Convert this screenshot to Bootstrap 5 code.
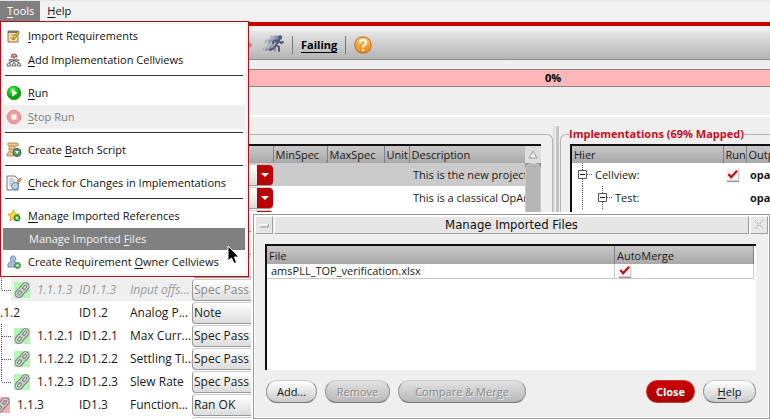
<!DOCTYPE html>
<html lang="en">
<head>
<meta charset="utf-8">
<meta name="viewport" content="width=device-width, initial-scale=1">
<title>Manage Imported Files</title>
<link href="https://cdn.jsdelivr.net/npm/bootstrap@5.3.0/dist/css/bootstrap.min.css" rel="stylesheet">
<style>
body{font:11px/16px "Open Sans","Noto Sans",sans-serif;color:#1a1a1a;background:#efefef;height:100vh;overflow:hidden}
u{text-underline-offset:2px}
.menubar{height:22px;border-top:1px solid #e4e4e4;background:#f2f2f2}
.menubar a{color:#111;text-decoration:none;padding:1px 6px 0 7px;line-height:18px}
.menubar a.opened{background:#808080;color:#fff}
.redline{height:4px;background:#c80000}
.tools{height:29px;margin-top:5px;padding-left:246px;background:linear-gradient(#e6e6e6,#b4b4b4);border-bottom:1px solid #888}
.vline{width:1px;height:18px;background:#777}
.tools a{color:#000;font-size:11px;font-weight:700;text-decoration:underline;text-underline-offset:3px}
.prog{margin-top:9px;height:18px;border:solid #888;border-width:1px 0;background:#ffb6b6;color:#000;font-weight:700;padding-left:336px}
.whiteline{height:2px;background:#fff;margin-top:28px}
.panes{padding-top:9px;min-height:0;overflow:hidden}
.leftpane{width:553px;flex:none;margin-top:8px;border:solid #b4b4b4;border-width:1px 1px 0 0;border-radius:0 6px 0 0;padding:9px 11px 0 0}
.splitter{width:6px;flex:none;background:linear-gradient(90deg,#ddd 0 2px,#f4f4f4 2px 3px,#c4c4c4 3px)}
.rightpane{min-width:0;border:1px solid #b4b4b4;border-width:1px 0 0 1px;border-radius:6px 0 0 0;padding:2px 0 0 9px;margin-left:1px}
.rightpane legend{float:none;width:auto;margin:0 0 0 -1px;padding:0;font-size:11px;line-height:16px;font-weight:700;color:#c4101c;white-space:nowrap}
.sheet{border-top:2px solid #111;background:#fff;overflow:hidden}
.inset{border-left:2px solid #111}
.gridtable{width:100%;table-layout:fixed;border-collapse:collapse;white-space:nowrap}
.gridtable th{font-weight:400;background:linear-gradient(#c8c8c8,#a8a8a8);height:17px;padding:0 2px;line-height:17px;border-right:1px solid #808080;overflow:hidden}
.gridtable td{height:23px;padding:0;line-height:18px;overflow:hidden;color:#1a1a1a}
.gridtable svg{display:block}
.wide td{font-size:12px}
.chosen td{background:#cbcbcb}
.off td{background:#efefef;color:#999;font-style:italic}
.off td:first-child{background:linear-gradient(90deg,#fff 11px,#efefef 11px)}
.pick{appearance:none;display:block;width:81px;height:22px;border:1px solid #999;border-top-color:#ccc;border-right:0;border-radius:4px;padding:0 1px;font:12px/16px "Open Sans","Noto Sans",sans-serif;color:#1a1a1a;
background:url("data:image/svg+xml,%3Csvg xmlns='http://www.w3.org/2000/svg' width='16' height='22'%3E%3Cpath d='M0 0h12q4 0 4 4v14q0 4-4 4H0z' fill='%23bb0008'/%3E%3Cpath d='M4 9h8l-4 4z' fill='%23fff'/%3E%3C/svg%3E") right center no-repeat,linear-gradient(#fff,#dcdcdc)}
.pick:disabled{color:#888;opacity:1}
.bar{width:16px;flex:none;background:#999}
.bar .up{height:17px;background:#ddd}
.bar .thumb{height:270px;border-radius:7px 7px 0 0;background:#b6b6b6;border:1px solid #ccc}
.chk{appearance:none;display:block;width:12px;height:12px;margin:0;border:1px solid #ccc;border-width:0 1px 1px 0;box-shadow:0 1px 1px #999;
background:#f3f3f3 url("data:image/svg+xml,%3Csvg xmlns='http://www.w3.org/2000/svg' viewBox='0 0 12 12'%3E%3Cpath d='M1.5 5.5L4.5 9 11 2' fill='none' stroke='%23c01018' stroke-width='2.4'/%3E%3C/svg%3E")}
.toolmenu{position:absolute;left:0;top:21px;width:249px;min-width:0;border:1px solid #a8121a;border-radius:0;padding:2px 3px 2px 2px;background:#f5f5f5;z-index:5;font-size:11px;margin:0;display:block}
.toolmenu li{background:#fff}
.toolmenu .entry{display:flex;align-items:center;width:100%;height:24px;border:0;background:none;padding:0 0 0 3px;color:#111;text-align:left;white-space:nowrap;line-height:16px}
.toolmenu .entry svg{flex:none;width:16px;height:16px;margin-right:6px}
.toolmenu .entry.bare{height:22px;padding-left:26px;background:#808080;color:#f2f2f2}
.toolmenu .entry:disabled{background:#efefef;color:#808080}
.toolmenu .split{height:9px;padding:3px 2px 0}
.toolmenu hr{margin:0;border-top:1px solid #333;opacity:1}
.pointer{position:absolute;left:227px;top:245px;z-index:6}
.filewin{position:absolute;left:253px;right:0;top:214px;bottom:0;border:1px solid #999;background:#efefef;box-shadow:0 0 0 2px #fff;z-index:4;outline:1px solid #fff;outline-offset:-2px;padding:1px}
.titlebar{gap:1px;height:18px;flex:none}
.titlebar button,.titlebar h1{border:1px solid;border-color:#fff #a0a0a0 #a0a0a0 #fff;background:#e6e6e6;margin:0;padding:0}
.titlebar button{width:18px;flex:none}
.titlebar h1{font:13px/16px "DejaVu Sans Condensed","DejaVu Sans",sans-serif;color:#111}
.filewin .sheet{margin:10px 12px 0 10px;padding-right:2px}
.filewin .gridtable th{height:18px}
.filewin .gridtable td{height:14px;line-height:14px;border:1px solid #c8c8c8;border-width:0 1px 1px 0;padding:0 4px}
.actions{padding:10px 12px 14px 11px}
.actions .btn{height:23px;border:1px solid #999;border-top-color:#ccc;border-bottom-color:#777;border-radius:11px;padding:0;font-size:11px;line-height:20px;color:#111;background:linear-gradient(#fff,#cacaca)}
.actions .btn:disabled{background:linear-gradient(#e2e2e2,#b8b8b8);color:#888;opacity:1;text-shadow:1px 1px #eee}
.actions .btn.primary{background:linear-gradient(#d00000,#a80000);border-color:#b84040;color:#fff;font-weight:700}
.wadd{width:51px}.wremove{width:65px}.wmerge{width:128px}.wclose{width:49px}.whelp{width:53px}
</style>
<script src="https://cdn.jsdelivr.net/npm/bootstrap@5.3.0/dist/js/bootstrap.bundle.min.js"></script>
</head>
<body class="d-flex flex-column position-relative">
<svg width="0" height="0" class="position-absolute">
  <defs>
    <g id="chain"><g fill="none" stroke="#777" stroke-width="3.4"><rect x="-2.500" y="-4" width="5" height="8" rx="2.500" transform="translate(10.400 5.600) rotate(40)"/><rect x="-2.500" y="-4" width="5" height="8" rx="2.500" transform="translate(5.800 10.600) rotate(40)"/></g><g fill="none" stroke="#c9cdc9" stroke-width="1.600"><rect x="-2.500" y="-4" width="5" height="8" rx="2.500" transform="translate(10.400 5.600) rotate(40)"/><rect x="-2.500" y="-4" width="5" height="8" rx="2.500" transform="translate(5.800 10.600) rotate(40)"/></g></g>
    <g id="leaf"><rect x="14" y="4" width="16" height="16" fill="#b4f7b4"/><use href="#chain" x="14" y="4"/><path d="M2 12.500h9" stroke="#555" stroke-dasharray="1 1"/></g>
    <g id="runner" fill="none" stroke-linecap="round" stroke-linejoin="round" stroke-width="2"><circle cx="13" cy="2.500" r="1.200"/><path d="M12 5L9 10l3 2v4M9 10l-2 3-4 2M11 5L7 6 6 8M12 6l2 2 2-1"/></g>
    <radialGradient id="grn" cx=".4" cy=".3"><stop offset="0" stop-color="#9f9"/><stop offset=".5" stop-color="#1fd41f"/><stop offset="1" stop-color="#0aa30a"/></radialGradient>
    <linearGradient id="org" x2="0" y2="1"><stop stop-color="#ffc766"/><stop offset="1" stop-color="#f08418"/></linearGradient>
  </defs>
</svg>

<nav class="menubar d-flex flex-shrink-0" aria-label="Main"><a class="opened" href="#"><u>T</u>ools</a><a href="#"><u>H</u>elp</a></nav>
<div class="redline flex-shrink-0"></div>
<div class="tools d-flex align-items-center flex-shrink-0">
  <svg width="16" height="18" viewBox="0 0 16 18" aria-hidden="true"><path d="M1 5l4.500 4L1 13z" fill="#f4a0a0" stroke="#c33"/></svg>
  <svg width="22" height="20" viewBox="0 0 22 20" aria-hidden="true"><use href="#runner" x="-3" stroke="#b0b4bf"/><use href="#runner" x="1" stroke="#8e95a8"/><use href="#runner" x="5" stroke="#4e5872"/></svg>
  <div class="vline ms-2 me-2"></div><a href="#">Failing</a><div class="vline ms-2"></div>
  <svg class="ms-2" width="18" height="18" viewBox="0 0 18 18" aria-hidden="true"><rect x="1" y="1" width="16" height="16" rx="7" fill="url(#org)" stroke="#b86a1c"/><path d="M6 7Q6 4 9 4t3 2.700Q12 8 10.500 9T9 11.500M9 13v2" fill="none" stroke="#fff" stroke-width="2"/></svg>
</div>
<div class="prog d-flex align-items-center justify-content-center flex-shrink-0" role="progressbar" aria-label="Verified" aria-valuenow="0" aria-valuemin="0" aria-valuemax="100">0%</div>
<div class="whiteline flex-shrink-0"></div>

<main class="panes d-flex flex-grow-1">
  <section class="leftpane">
    <div class="sheet d-flex">
      <div class="flex-grow-1 overflow-hidden">
      <table class="gridtable">
        <colgroup><col style="width:79px"><col style="width:51px"><col style="width:62px"><col style="width:81px"><col style="width:54px"><col style="width:57px"><col style="width:25px"><col></colgroup>
        <thead><tr><th></th><th></th><th></th><th></th><th>MinSpec</th><th>MaxSpec</th><th>Unit</th><th class="border-0">Description</th></tr></thead>
        <tbody>
        <tr class="chosen"><td></td><td></td><td></td><td><select class="pick" aria-label="Type"><option></option></select></td><td></td><td></td><td></td><td class="ps-1">This is the new project</td></tr>
        <tr><td></td><td></td><td></td><td><select class="pick" aria-label="Type"><option></option></select></td><td></td><td></td><td></td><td class="ps-1">This is a classical OpAmp</td></tr>
        <tr><td></td><td></td><td></td><td><select class="pick" aria-label="Type"><option></option></select></td><td colspan="4"></td></tr>
        <tr><td></td><td></td><td></td><td><select class="pick" aria-label="Type"><option></option></select></td><td colspan="4"></td></tr>
        <tr><td></td><td></td><td></td><td><select class="pick" aria-label="Type"><option></option></select></td><td colspan="4"></td></tr>
        </tbody>
        <tbody class="wide">
        <tr class="off"><td><div class="d-flex align-items-center"><svg width="37" height="23"><path d="M1.500 0v12" stroke="#555" stroke-dasharray="1 1"/><use href="#leaf"/></svg>1.1.1.3</div></td><td>ID1.1.3</td><td>Input offs...</td><td><select class="pick" aria-label="Type of 1.1.1.3" disabled><option>Spec Pass</option></select></td><td colspan="4"></td></tr>
        <tr><td>.1.2</td><td>ID1.2</td><td>Analog P...</td><td><select class="pick" aria-label="Type of 1.1.2"><option>Note</option></select></td><td colspan="4"></td></tr>
        <tr><td><div class="d-flex align-items-center"><svg width="37" height="23"><path d="M1.500 0v23" stroke="#555" stroke-dasharray="1 1"/><use href="#leaf"/></svg>1.1.2.1</div></td><td>ID1.2.1</td><td>Max Curr...</td><td><select class="pick" aria-label="Type of 1.1.2.1"><option>Spec Pass</option></select></td><td colspan="4"></td></tr>
        <tr><td><div class="d-flex align-items-center"><svg width="37" height="23"><path d="M1.500 0v23" stroke="#555" stroke-dasharray="1 1"/><use href="#leaf"/></svg>1.1.2.2</div></td><td>ID1.2.2</td><td>Settling Ti...</td><td><select class="pick" aria-label="Type of 1.1.2.2"><option>Spec Pass</option></select></td><td colspan="4"></td></tr>
        <tr><td><div class="d-flex align-items-center"><svg width="37" height="23"><path d="M1.500 0v12" stroke="#555" stroke-dasharray="1 1"/><use href="#leaf"/></svg>1.1.2.3</div></td><td>ID1.2.3</td><td>Slew Rate</td><td><select class="pick" aria-label="Type of 1.1.2.3"><option>Spec Pass</option></select></td><td colspan="4"></td></tr>
        <tr><td><div class="d-flex align-items-center"><svg width="17" height="23"><path d="M0 4h10v16H0z" fill="#ffaeb0"/><svg width="10" height="23"><use href="#chain" x="-6" y="4"/></svg></svg>1.1.3</div></td><td>ID1.3</td><td>Function...</td><td><select class="pick" aria-label="Type of 1.1.3"><option>Ran OK</option></select></td><td colspan="4"></td></tr>
        <tr><td></td><td></td><td></td><td><select class="pick" aria-label="Type"><option></option></select></td><td colspan="4"></td></tr>
        </tbody>
      </table>
      </div>
      <div class="bar"><div class="up"><svg width="16" height="17" class="d-block"><path d="M4 12h8L8 5z" fill="#eee" stroke="#999"/></svg></div><div class="thumb"></div></div>
    </div>
  </section>
  <div class="splitter"></div>
  <fieldset class="rightpane flex-grow-1">
    <legend>Implementations (69% Mapped)</legend>
    <div class="sheet inset">
      <table class="gridtable">
        <colgroup><col style="width:151px"><col style="width:23px"><col></colgroup>
        <thead><tr><th>Hier</th><th>Run</th><th class="border-0">Output</th></tr></thead>
        <tbody>
        <tr><td><div class="d-flex align-items-center"><svg width="23" height="23"><path d="M10.500 0v23M15 11.500h5" stroke="#555" stroke-dasharray="1 1"/><path d="M6.500 7.500h8v8h-8z" fill="#fff" stroke="#555"/><path d="M8 11.500h5" stroke="#111"/></svg>Cellview:</div></td><td><input class="chk ms-1" type="checkbox" checked aria-label="Run cellview"></td><td class="ps-1 fw-bold">opamp</td></tr>
        <tr><td><div class="d-flex align-items-center"><svg width="43" height="23"><path d="M10.500 0v23M30.500 0v23M35 11.500h5" stroke="#555" stroke-dasharray="1 1"/><path d="M26.500 7.500h8v8h-8z" fill="#fff" stroke="#555"/><path d="M28 11.500h5" stroke="#111"/></svg>Test:</div></td><td></td><td class="ps-1 fw-bold">opamp</td></tr>
        <tr><td></td><td></td><td></td></tr>
        </tbody>
      </table>
    </div>
  </fieldset>
</main>

<ul class="toolmenu dropdown-menu">
  <li><button class="entry" type="button"><svg viewBox="0 0 16 16"><path d="M2 3h10v11H2z" fill="#f4e2a2" stroke="#85764f"/><path d="M2 3h10v2H2z" fill="#777"/><path d="M5 7h4M4 10h5" stroke="#b99b45"/><path d="M6 11l6-8 1.500 1L8 12z" fill="#eebd3c" stroke="#79602c" stroke-width=".7"/></svg><span><u>I</u>mport Requirements</span></button></li>
  <li><button class="entry" type="button"><svg viewBox="0 0 16 16"><path d="M8 5v3M8 8L3 11M8 8l5 3M8 8v3" stroke="#555"/><path d="M5 5q0-3 3-3t3 3z" fill="#d9a0a0" stroke="#a34a4a"/><path d="M3 9q0-2 2-2t2 2zM9 9q0-2 2-2t2 2zM1 14q0-3 2-3t2 3zM6 14q0-3 2-3t2 3zM11 14q0-3 2-3t2 3z" fill="#d8d8d8" stroke="#777"/></svg><span><u>A</u>dd Implementation Cellviews</span></button></li>
  <li class="split"><hr></li>
  <li><button class="entry" type="button"><svg viewBox="0 0 16 16"><circle cx="8" cy="8" r="6.800" fill="url(#grn)" stroke="#168616" stroke-width=".7"/><path d="M6 4.500v7L11.500 8z" fill="#fff"/></svg><span><u>R</u>un</span></button></li>
  <li><button class="entry" type="button" disabled><svg viewBox="0 0 16 16"><circle cx="8" cy="8" r="6.800" fill="#ee9d9d" stroke="#d77" stroke-width=".8"/><path d="M5.500 5.500h5v5h-5z" fill="#fff"/></svg><span><u>S</u>top Run</span></button></li>
  <li class="split"><hr></li>
  <li><button class="entry" type="button"><svg viewBox="0 0 16 16"><path d="M2 1h9q2 0 1 3H9v7q1 3-2 3H1q-1-3 2-3V4Q1 3 2 1z" fill="#edc793" stroke="#a77743" stroke-width=".8"/><path d="M4 4h4M4 7h4M4 10h3" stroke="#b98852"/><circle cx="11" cy="10.500" r="4" fill="#5b9a70" stroke="#286940"/><path d="M9 9h4l-2 3z" fill="#e5fae8"/></svg><span>Create <u>B</u>atch Script</span></button></li>
  <li class="split"><hr></li>
  <li><button class="entry" type="button"><svg viewBox="0 0 16 16"><path d="M1 1h8l3 3v11H1z" fill="#f6f6f6" stroke="#777"/><path d="M3 4h5M3 6h6M3 8h3M3 10h2" stroke="#aaa"/><path d="M10 9l4-6 1.500 1-4 6z" fill="#e9953b" stroke="#a0561c" stroke-width=".5"/><circle cx="9" cy="11" r="3.500" fill="#b7d4ee" stroke="#5f86a9"/></svg><span><u>C</u>heck for Changes in Implementations</span></button></li>
  <li class="split"><hr></li>
  <li><button class="entry" type="button"><svg viewBox="0 0 16 16"><path d="M7.500 2l1.600 3.700 4 .4-3 2.700.9 4-3.500-2.100L4 12.800l.9-4-3-2.700 4-.4z" fill="#ffd83c" stroke="#c59811" stroke-width=".8"/><circle cx="11" cy="10" r="3" fill="#43a847" stroke="#257c2b"/><path d="M9.500 10h3M11 8.500v3" stroke="#fff"/></svg><span><u>M</u>anage Imported References</span></button></li>
  <li><button class="entry bare" type="button"><span>Manage Imported <u>F</u>iles</span></button></li>
  <li><button class="entry" type="button"><svg viewBox="0 0 16 16"><path d="M2 13q-1-5 4-5.500Q3.500 6 4.500 3.500 7 0 9.500 3.500q1 2.500-1.500 4 4 .5 4 5.500z" fill="#a9bade" stroke="#6379a8" stroke-width=".8"/><circle cx="11.500" cy="11.500" r="3" fill="#58b45b" stroke="#2f8035" stroke-width=".8"/><path d="M10 11.500h3M11.500 10v3" stroke="#fff"/></svg><span>Create Requirement <u>O</u>wner Cellviews</span></button></li>
</ul>
<svg class="pointer" width="14" height="20" aria-hidden="true"><path d="M1 1v15l3.500-3L7 18.500l2.500-1L7.500 12H12z" fill="#000" stroke="#fff"/></svg>

<section class="filewin d-flex flex-column" role="dialog" aria-labelledby="wintitle">
  <div class="titlebar d-flex">
    <button type="button" aria-label="Window menu"><svg class="d-block" width="16" height="16"><path d="M4 9.500V7.500h8" fill="none" stroke="#fff"/><path d="M4 10h8.500V7" fill="none" stroke="#999"/></svg></button>
    <h1 id="wintitle" class="flex-grow-1 text-center">Manage Imported Files</h1>
    <button type="button" aria-label="Close window"><svg class="d-block" width="16" height="16"><path d="M4 3l3 3v3l-3 3M12 3L9 6v3l3 3" fill="none" stroke="#aaa" stroke-dasharray="2 1"/><path d="M5 3l3 3M11 12L8 9" stroke="#fff"/></svg></button>
  </div>
  <div class="sheet inset flex-grow-1">
    <table class="gridtable">
      <colgroup><col><col style="width:139px"></colgroup>
      <thead><tr><th>File</th><th>AutoMerge</th></tr></thead>
      <tbody><tr><td>amsPLL_TOP_verification.xlsx</td><td><input class="chk" type="checkbox" checked aria-label="AutoMerge"></td></tr></tbody>
    </table>
  </div>
  <div class="actions d-flex gap-2">
    <button class="btn wadd" type="button">Add...</button><button class="btn wremove" type="button" disabled>Remove</button><button class="btn wmerge" type="button" disabled>Compare &amp; Merge</button>
    <button class="btn primary wclose ms-auto" type="button">Close</button><button class="btn whelp" type="button"><u>H</u>elp</button>
  </div>
</section>
</body>
</html>
